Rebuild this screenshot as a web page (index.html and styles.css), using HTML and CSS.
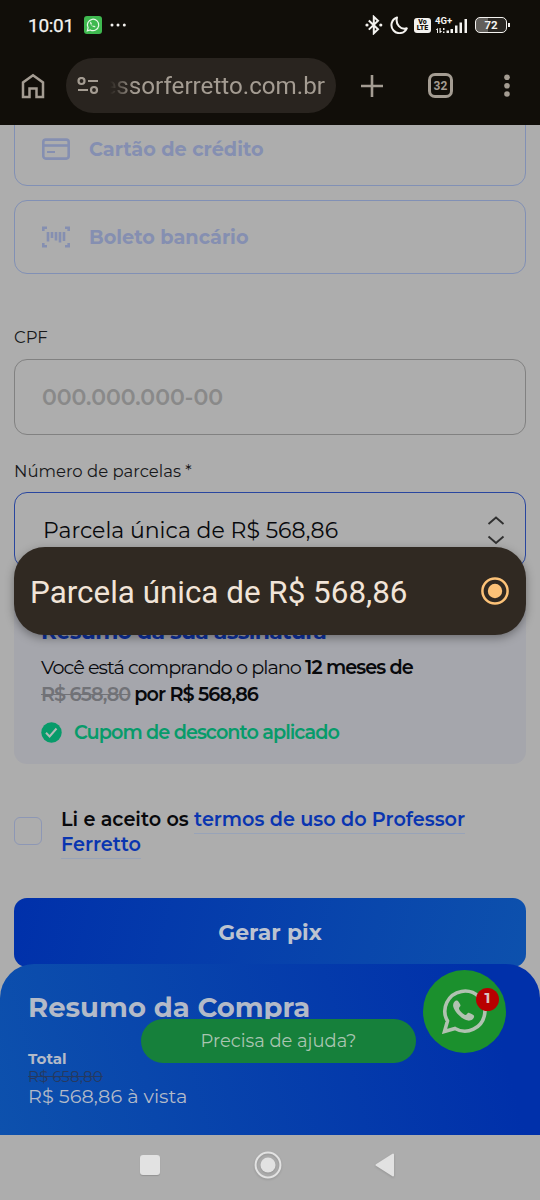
FILE: index.html
```html
<!DOCTYPE html>
<html lang="pt-BR">
<head>
<meta charset="utf-8">
<title>Professor Ferretto - Pagamento</title>
<link rel="stylesheet" href="styles.css">
</head>
<body>
<header class="chrome">
  <div class="status">
    <span class="clock">10:01</span>
    <svg class="wa-mini" width="18" height="18" viewBox="0 0 18 18"><rect width="18" height="18" rx="3" fill="#3fb950"/><path d="M3.3 14.8l.8-3.1a5.7 5.7 0 1 1 2.2 2.2z" fill="none" stroke="#e9f7ea" stroke-width="1.2"/><path d="M6.6 5.600c-.9.7-.7 2.200.9 3.900s3.300 2.200 4.100 1.200l-1.700-1.200-.8.6c-1-.5-1.500-1-1.800-1.900l.6-.7z" fill="#e9f7ea"/></svg>
    <svg class="dots" width="18" height="4" viewBox="0 0 18 4" fill="#f4f2ef"><circle cx="2" cy="2" r="1.500"/><circle cx="8" cy="2" r="1.500"/><circle cx="14.300" cy="2" r="1.500"/></svg>
    <div class="signals">
      <svg width="18" height="20" viewBox="0 0 18 20"><path d="M3.800 5.500l9.200 8.800-4.200 4V1.800l4.200 4-9.200 8.800" fill="none" stroke="#f4f2ef" stroke-width="2"/><circle cx="2" cy="10" r="1.600" fill="#f4f2ef"/><circle cx="15.800" cy="10" r="1.600" fill="#f4f2ef"/></svg>
      <svg width="18" height="18" viewBox="0 0 18 18"><path d="M7 1.500A8 8 0 1 0 16.800 12.300C10.500 14.200 5.200 8.300 7 1.500z" fill="none" stroke="#f4f2ef" stroke-width="2" stroke-linejoin="round"/></svg>
      <span class="volte"><span>Vo</span><span>LTE</span></span>
      <div class="network">
        <span class="gen">4G+</span>
        <svg width="33" height="17" viewBox="0 0 33 17" fill="#f4f2ef"><path d="M1 12.500L3 11v5H2v-3H1zM4.500 11h1.200v3h1.500L5.200 16h-.7zM8 11h1.500v2H8zM8 14.500h1.500V16H8zM11.500 13.500H14V16h-2.500zM15.500 12H18v4h-2.500zM20 8.500h2.500V16H20zM24.500 5.500H27V16h-2.500zM29.500 2H32v14h-2.500z"/></svg>
      </div>
      <div class="battery"><span>72</span></div>
    </div>
  </div>
  <div class="toolbar">
    <svg class="home" width="24" height="26" viewBox="0 0 24 26"><path d="M2 24V9.500L12 2.200l10 7.300V24h-6.500v-8.500h-7V24z" fill="none" stroke="#a49c92" stroke-width="2.500"/></svg>
    <div class="omnibox">
      <svg width="22" height="18" viewBox="0 0 22 18" fill="none" stroke="#a49c92" stroke-width="2.200"><circle cx="4.500" cy="4" r="3"/><path d="M11 4h10M1 13h10"/><circle cx="17" cy="13" r="3"/></svg>
      <div class="url">essorferretto.com.br</div>
    </div>
    <svg class="plus" width="22" height="22" viewBox="0 0 22 22"><path d="M11 0v22M0 11h22" stroke="#a49c92" stroke-width="2.600"/></svg>
    <div class="tabs">32</div>
    <svg class="kebab" width="6" height="24" viewBox="0 0 6 24" fill="#a49c92"><circle cx="3" cy="3.200" r="2.800"/><circle cx="3" cy="11.700" r="2.800"/><circle cx="3" cy="20" r="2.800"/></svg>
  </div>
</header>

<main class="page">
  <div class="method method-card">
    <svg width="28" height="22" viewBox="0 0 28 22" fill="none" stroke="#858fb1" stroke-width="2.600"><rect x="1.300" y="1.600" width="25.400" height="19" rx="2.500"/><path d="M1 7.500h26"/><path d="M5 14h8" stroke-width="2"/></svg>
    <span>Cartão de crédito</span>
  </div>
  <div class="method method-slip">
    <svg width="28" height="22" viewBox="0 0 28 22" fill="none" stroke="#858fb1" stroke-width="2.600"><path d="M1.300 5V1.700H5M23 1.700h3.700V5M26.700 17v3.300H23M5 20.300H1.300V17"/><path d="M6 6v9.500M10 6v6M14 6v8.500M18 6v10.500M22 6v9"/></svg>
    <span>Boleto bancário</span>
  </div>

  <label class="label label-cpf">CPF</label>
  <div class="field placeholder">000.000.000-00</div>

  <label class="label label-parcelas">Número de parcelas *</label>
  <div class="field select">
    <span>Parcela única de R$ 568,86</span>
    <svg width="18" height="30" viewBox="0 0 18 30" fill="none" stroke="#303030" stroke-width="1.900"><path d="M1.500 9L9 2.500 16.500 9M1.500 21.500L9 28l7.500-6.500"/></svg>
  </div>

  <section class="summary">
    <h2>Resumo da sua assinatura</h2>
    <p>Você está comprando o plano <b>12 meses de</b></p>
    <p><s>R$ 658,80</s> <b>por R$ 568,86</b></p>
    <div class="coupon">
      <svg width="21" height="21" viewBox="0 0 21 21"><circle cx="10.500" cy="10.500" r="10.200" fill="#079b6a"/><path d="M5 10.800l3.600 3.700 6.900-8" fill="none" stroke="#b4bab7" stroke-width="2"/></svg>
      <span>Cupom de desconto aplicado</span>
    </div>
  </section>

  <div class="terms">
    <span class="checkbox"></span>
    <p>Li e aceito os <a>termos de uso do Professor</a><br><a>Ferretto</a></p>
  </div>

  <div class="submit">Gerar pix</div>

  <div class="option">
    <span>Parcela única de R$ 568,86</span>
    <svg width="28" height="28" viewBox="0 0 28 28"><circle cx="14" cy="14" r="12.600" fill="none" stroke="#fcc278" stroke-width="2.500"/><circle cx="14" cy="14" r="7.200" fill="#fcc278"/></svg>
  </div>

  <footer class="total">
    <h2>Resumo da Compra</h2>
    <strong>Total</strong>
    <s>R$ 658,80</s>
    <span class="cash">R$ 568,86 à vista</span>
  </footer>
  <div class="help">Precisa de ajuda?</div>
  <div class="whatsapp">
    <svg width="46" height="46" viewBox="0 0 46 46"><path d="M2.500 43.500l3-10.500a20 20 0 1 1 7.500 7.500z" fill="none" stroke="#b1c2b1" stroke-width="3.600"/><path d="M15 12.600c-1.200-.6-3.600 1.300-3.900 4.300-.5 5.300 8.700 15 15 15.700 3 .3 6.200-1.700 6-4.600-.1-1-4.500-3.300-5.700-3.300-1.200.2-1.700 2.200-2.900 2.200-2.100-.3-6.500-4.700-6.500-6.500 0-1.200 1.700-1.900 1.500-3-.1-1-2-4.200-3.500-4.800z" fill="#b1c2b1"/></svg>
    <span class="badge">1</span>
  </div>
</main>

<nav class="nav">
  <span class="recent"></span>
  <svg width="28" height="28" viewBox="0 0 28 28"><circle cx="14" cy="14" r="12.400" fill="none" stroke="#e2e2e2" stroke-width="2"/><circle cx="14" cy="14" r="7.500" fill="#e2e2e2"/></svg>
  <svg width="20" height="24" viewBox="0 0 20 24"><path d="M1.500 12L18 1.500v21z" fill="#e2e2e2" stroke="#e2e2e2" stroke-linejoin="round" stroke-width="2"/></svg>
</nav>
</body>
</html>
```
FILE: styles.css
```css
* { box-sizing: border-box; }
body {
  margin: 0;
  width: 540px;
  height: 1200px;
  overflow: hidden;
  display: flex;
  flex-direction: column;
  background: #adadad;
  color: #08090c;
  font-family: Montserrat, Inter, sans-serif;
}
h2, p { margin: 0; }
svg { display: block; flex: none; }
span, s, b, strong { white-space: pre; }

/* Browser and status bars */
.chrome {
  height: 125px;
  flex: none;
  background: #110e09;
  font-family: Roboto, sans-serif;
}
.status {
  display: flex;
  align-items: center;
  height: 50px;
  padding: 0 29px 0 28px;
  color: #f4f2ef;
}
.clock { width: 56px; font-size: 19px; letter-spacing: -.3px; padding-top: 1px; -webkit-text-stroke: .25px #f4f2ef; }
.dots { margin-left: 8px; }
.signals { margin-left: auto; display: flex; align-items: center; gap: 7px; }
.volte {
  display: flex;
  flex-direction: column;
  align-items: center;
  justify-content: center;
  width: 17px;
  height: 15px;
  border-radius: 3px;
  background: #f4f2ef;
  color: #110e09;
  font-size: 7px;
  line-height: 6.500px;
  font-weight: 900;
  margin-left: -1px;
}
.network { position: relative; margin: 0 0 0 -3px; }
.gen { position: absolute; left: 0; top: -1px; font-size: 9.500px; line-height: 10px; font-weight: 700; }
.battery {
  position: relative;
  width: 32px;
  height: 16px;
  border: 1.500px solid #f4f2ef;
  border-radius: 5px;
  background: linear-gradient(90deg, #625f5b 40%, #2a2723 40%);
  font-size: 11.500px;
  font-weight: 700;
  line-height: 14px;
  text-align: center;
  margin-right: 4px;
}
.battery::after {
  content: "";
  position: absolute;
  right: -4px;
  top: 5px;
  width: 2px;
  height: 4px;
  background: #f4f2ef;
}
.toolbar { display: flex; align-items: center; height: 55px; margin-top: 8px; padding: 0 30px 0 21px; }
.omnibox {
  display: flex;
  align-items: center;
  width: 270px;
  height: 55px;
  margin-left: 21px;
  padding-left: 11px;
  border-radius: 28px;
  background: #29241f;
}
.url {
  width: 223px;
  margin-left: 3px;
  display: flex;
  justify-content: flex-end;
  color: #a49c92;
  font-size: 24.200px;
  line-height: 32px;
  -webkit-mask-image: linear-gradient(90deg, transparent 8px, #000 32px);
  mask-image: linear-gradient(90deg, transparent 8px, #000 32px);
}
.plus { margin-left: 25px; }
.tabs {
  width: 25px;
  height: 25px;
  margin-left: 45px;
  border: 3px solid #a49c92;
  border-radius: 7px;
  color: #a49c92;
  font-size: 12px;
  line-height: 20px;
  font-weight: 700;
  text-align: center;
}
.kebab { margin-left: auto; }

/* Checkout form */
.page {
  position: relative;
  height: 1010px;
  flex: none;
  padding: 0 14px;
  overflow: hidden;
}
.method {
  display: flex;
  align-items: center;
  gap: 19px;
  height: 74px;
  padding-left: 27px;
  border: 1px solid #8190b5;
  border-radius: 13px;
  color: #858fb1;
  font-size: 19.240px;
  font-weight: 700;
}
.method-card { margin-top: -13px; }
.method-slip { margin-top: 14px; }
.label { display: block; font-size: 16.490px; line-height: 20px; color: #17181a; }
.label-cpf { margin-top: 53px; }
.label-parcelas { margin-top: 26px; }
.field {
  height: 76px;
  border: 1px solid #818181;
  border-radius: 13px;
  padding: 0 20px 0 28px;
  display: flex;
  align-items: center;
  justify-content: space-between;
  font-size: 21.980px;
}
.placeholder { margin-top: 12px; padding-left: 27px; font-weight: 600; color: #898989; }
.select { margin-top: 11px; border-color: #29469f; }

.summary {
  height: 196px;
  padding: 52px 28px 0 27px;
  border-radius: 13px;
  background: #a5a6ac;
  font-size: 19.240px;
  letter-spacing: -.960px;
}
.summary h2 { font-size: 21.980px; line-height: 24px; letter-spacing: -.66px; color: #0d31a0; white-space: nowrap; }
.summary p { line-height: 27px; white-space: nowrap; }
.summary h2 + p { margin-top: 10px; }
.summary b { font-weight: 600; }
.summary s { color: #717277; font-weight: 600; }
.coupon {
  display: flex;
  align-items: center;
  gap: 12px;
  height: 24px;
  margin-top: 12px;
  color: #079b6a;
  font-weight: 600;
}

.terms { display: flex; align-items: center; gap: 19px; margin-top: 42px; }
.checkbox { width: 28px; height: 28px; border: 1px solid #8d97b5; border-radius: 6px; }
.terms p { padding-top: 1px; margin-bottom: -1px; font-size: 19.240px; font-weight: 600; line-height: 25px; white-space: nowrap; }
.terms a { color: #0a35b0; border-bottom: 1px solid #98a3b8; padding-bottom: 2px; }

.submit {
  height: 69px;
  margin-top: 42px;
  border-radius: 13px;
  background: linear-gradient(105deg, #0030aa, #0d51ad);
  color: #bcc3d0;
  font-size: 21.980px;
  font-weight: 700;
  line-height: 69px;
  text-align: center;
}

/* Native picker shown over the form */
.option {
  position: absolute;
  left: 14px;
  top: 422px;
  width: 512px;
  height: 88px;
  padding: 0 17px 0 16px;
  display: flex;
  align-items: center;
  justify-content: space-between;
  border-radius: 31px;
  background: #302922;
  box-shadow: 0 3px 10px rgba(0, 0, 0, .35);
  color: #f1e4d8;
  font: 31.400px/40px Roboto, sans-serif;
}
.option span { padding-top: 3px; }

.total {
  position: absolute;
  left: 0;
  right: 0;
  bottom: 0;
  height: 171px;
  padding: 26px 28px 0;
  display: flex;
  flex-direction: column;
  align-items: flex-start;
  border-radius: 34px 34px 0 0;
  background: linear-gradient(75deg, #0d51ad, #0030aa 90%);
  color: #b3bac8;
}
.total h2 { font-size: 27.480px; line-height: 35px; }
.total strong { margin-top: 24px; font-size: 15.100px; line-height: 19px; }
.total s { font-size: 15.100px; line-height: 18px; color: #26395f; }
.cash { font-size: 19.240px; line-height: 20px; }

.help {
  position: absolute;
  left: 141px;
  top: 894px;
  width: 275px;
  height: 44px;
  border-radius: 22px;
  background: #16803b;
  color: #a9c5b1;
  font-size: 17.900px;
  line-height: 44px;
  text-align: center;
}
.whatsapp {
  position: absolute;
  left: 423px;
  top: 845px;
  width: 83px;
  height: 83px;
  padding: 18px 0 0 19px;
  border-radius: 50%;
  background: #1b902d;
}
.badge {
  position: absolute;
  left: 53px;
  top: 18px;
  width: 23px;
  height: 23px;
  border-radius: 50%;
  background: #b80000;
  color: #d8c3c3;
  font-size: 15px;
  font-weight: 700;
  line-height: 19px;
  text-align: center;
}

/* System navigation */
.nav { height: 65px; padding: 0 145px 5px 140px; display: flex; align-items: center; justify-content: space-between; }
.nav svg { filter: drop-shadow(0 1px 1px rgba(0, 0, 0, .15)); }
.recent { width: 20px; height: 20px; border-radius: 3px; background: #e2e2e2; box-shadow: 0 1px 1px rgba(0, 0, 0, .15); }
```
